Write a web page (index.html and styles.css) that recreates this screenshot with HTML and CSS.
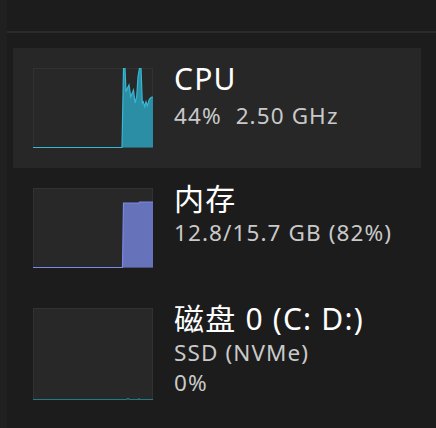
FILE: index.html
```html
<!DOCTYPE html>
<html>
<head>
<meta charset="utf-8">
<link rel="stylesheet" href="styles.css">
</head>
<body>
<div class="rail"></div>
<div class="main">
  <div class="header"></div>
  <div class="list">
    <div class="item selected">
      <svg class="chart" viewBox="0 0 120 80" preserveAspectRatio="none">
        <polygon class="cpu-fill" points="0,79.5 89,79.5 90.5,0 92,0 93,23.7 94.5,20 96,17 97.7,28.7 100.5,22 102,35 103.7,28.7 105,8.7 106.5,0 108,0 109.3,35 110.3,33.7 111.7,38.7 113,33.7 114.3,38 116.3,31.3 118.3,29.3 120,29 120,79.5"/>
        <polyline class="cpu-line" points="0,79.5 89,79.5 90.5,0 92,0 93,23.7 94.5,20 96,17 97.7,28.7 100.5,22 102,35 103.7,28.7 105,8.7 106.5,0 108,0 109.3,35 110.3,33.7 111.7,38.7 113,33.7 114.3,38 116.3,31.3 118.3,29.3 120,29"/>
      </svg>
      <div class="info">
        <div class="title">CPU</div>
        <div class="sub sub-lead">44%&nbsp; 2.50 GHz</div>
      </div>
    </div>
    <div class="item">
      <svg class="chart" viewBox="0 0 120 80" preserveAspectRatio="none">
        <polygon class="mem-fill" points="0,79.5 89.5,79.5 90.5,15 106,15 106.5,14 120,14 120,79.5"/>
        <polyline class="mem-line" points="0,79.5 89.5,79.5 90.5,15 106,15 106.5,14 120,14"/>
      </svg>
      <div class="info">
        <div class="title">内存</div>
        <div class="sub">12.8/15.7 GB (82%)</div>
      </div>
    </div>
    <div class="item">
      <svg class="chart tall" viewBox="0 0 120 92" preserveAspectRatio="none">
        <polyline class="disk-line" points="0,91.5 93,91.5 95,90.5 97,91.5 105,91.5 106,90.8 107,91.5 120,91.5"/>
      </svg>
      <div class="info">
        <div class="title">磁盘 0 (C: D:)</div>
        <div class="sub">SSD (NVMe)</div>
        <div class="sub">0%</div>
      </div>
    </div>
  </div>
</div>
</body>
</html>
```
FILE: styles.css
```css
html, body {
  margin: 0;
  padding: 0;
}
body {
  background: #1c1c1c;
  display: flex;
  width: 436px;
  height: 428px;
  overflow: hidden;
  font-family: "Noto Sans", "Noto Sans CJK SC", sans-serif;
}
.rail {
  width: 7px;
  background: #202020;
  flex: none;
}
.main {
  flex: 1;
  display: flex;
  flex-direction: column;
}
.header {
  height: 31px;
  border-bottom: 2px solid #2b2b2b;
  flex: none;
}
.list {
  padding: 15px 15px 0 6px;
}
.item {
  display: flex;
  align-items: flex-start;
  padding: 20px;
  gap: 21px;
}
.item.selected {
  background: #272727;
}
.chart {
  width: 120px;
  height: 80px;
  flex: none;
  display: block;
  background: #282828;
  box-shadow: inset 0 0 0 1px #323232;
}
.chart.tall {
  height: 92px;
}
.cpu-fill { fill: #2b8ea5; }
.cpu-line { fill: none; stroke: #37b7d4; stroke-width: 1.2; }
.mem-fill { fill: #6673bb; }
.mem-line { fill: none; stroke: #7a88e6; stroke-width: 1.2; }
.disk-line { fill: none; stroke: #1f7c82; stroke-width: 1.2; }
.info {
  display: flex;
  flex-direction: column;
  margin-top: -8px;
}
.title {
  color: #ffffff;
  font-size: 30px;
  line-height: 38px;
  letter-spacing: 1.2px;
}
.sub {
  color: #c9c9c9;
  font-size: 22.5px;
  line-height: 30px;
  letter-spacing: 1.1px;
}
.sub-lead {
  margin-top: 3px;
}
```
